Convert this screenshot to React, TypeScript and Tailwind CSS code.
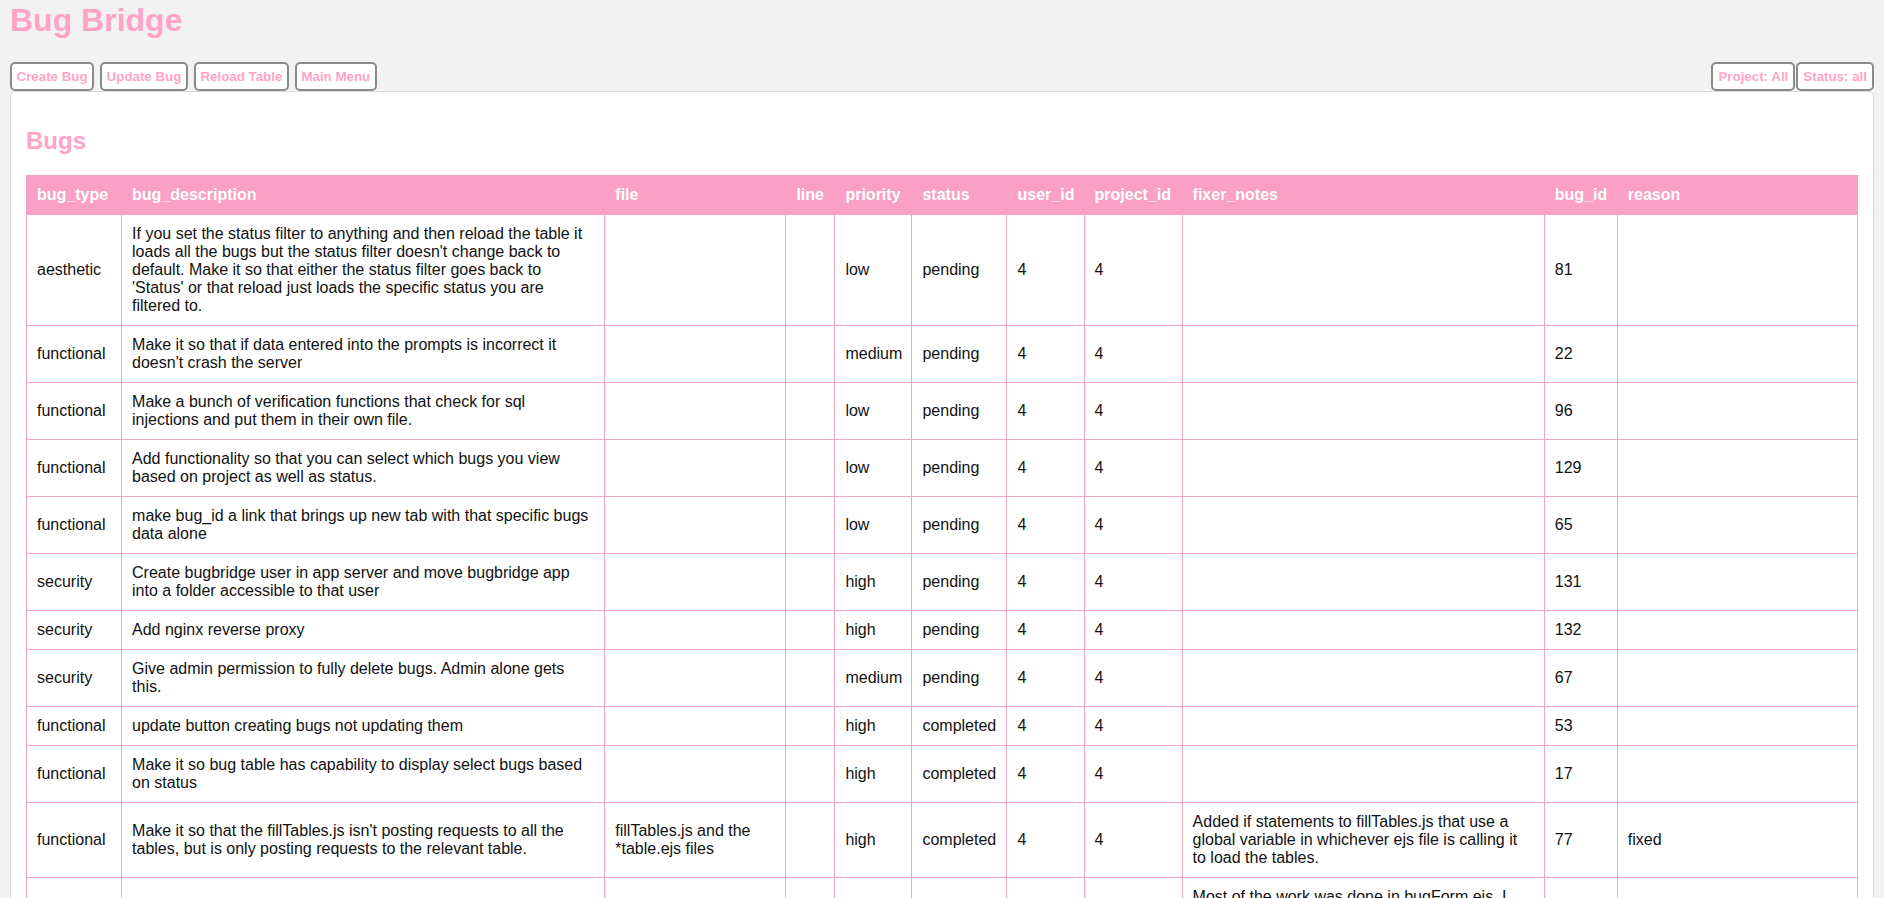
type Bug = {
  type: string;
  desc: string;
  file: string;
  line: string;
  priority: string;
  status: string;
  userId: number;
  projectId: number;
  notes: string;
  bugId: number;
  reason: string;
};

const bugs: Bug[] = [
  {
    type: "aesthetic",
    desc: "If you set the status filter to anything and then reload the table it loads all the bugs but the status filter doesn't change back to default. Make it so that either the status filter goes back to 'Status' or that reload just loads the specific status you are filtered to.",
    file: "",
    line: "",
    priority: "low",
    status: "pending",
    userId: 4,
    projectId: 4,
    notes: "",
    bugId: 81,
    reason: "",
  },
  {
    type: "functional",
    desc: "Make it so that if data entered into the prompts is incorrect it doesn't crash the server",
    file: "",
    line: "",
    priority: "medium",
    status: "pending",
    userId: 4,
    projectId: 4,
    notes: "",
    bugId: 22,
    reason: "",
  },
  {
    type: "functional",
    desc: "Make a bunch of verification functions that check for sql injections and put them in their own file.",
    file: "",
    line: "",
    priority: "low",
    status: "pending",
    userId: 4,
    projectId: 4,
    notes: "",
    bugId: 96,
    reason: "",
  },
  {
    type: "functional",
    desc: "Add functionality so that you can select which bugs you view based on project as well as status.",
    file: "",
    line: "",
    priority: "low",
    status: "pending",
    userId: 4,
    projectId: 4,
    notes: "",
    bugId: 129,
    reason: "",
  },
  {
    type: "functional",
    desc: "make bug_id a link that brings up new tab with that specific bugs data alone",
    file: "",
    line: "",
    priority: "low",
    status: "pending",
    userId: 4,
    projectId: 4,
    notes: "",
    bugId: 65,
    reason: "",
  },
  {
    type: "security",
    desc: "Create bugbridge user in app server and move bugbridge app into a folder accessible to that user",
    file: "",
    line: "",
    priority: "high",
    status: "pending",
    userId: 4,
    projectId: 4,
    notes: "",
    bugId: 131,
    reason: "",
  },
  {
    type: "security",
    desc: "Add nginx reverse proxy",
    file: "",
    line: "",
    priority: "high",
    status: "pending",
    userId: 4,
    projectId: 4,
    notes: "",
    bugId: 132,
    reason: "",
  },
  {
    type: "security",
    desc: "Give admin permission to fully delete bugs. Admin alone gets this.",
    file: "",
    line: "",
    priority: "medium",
    status: "pending",
    userId: 4,
    projectId: 4,
    notes: "",
    bugId: 67,
    reason: "",
  },
  {
    type: "functional",
    desc: "update button creating bugs not updating them",
    file: "",
    line: "",
    priority: "high",
    status: "completed",
    userId: 4,
    projectId: 4,
    notes: "",
    bugId: 53,
    reason: "",
  },
  {
    type: "functional",
    desc: "Make it so bug table has capability to display select bugs based on status",
    file: "",
    line: "",
    priority: "high",
    status: "completed",
    userId: 4,
    projectId: 4,
    notes: "",
    bugId: 17,
    reason: "",
  },
  {
    type: "functional",
    desc: "Make it so that the fillTables.js isn't posting requests to all the tables, but is only posting requests to the relevant table.",
    file: "fillTables.js and the *table.ejs files",
    line: "",
    priority: "high",
    status: "completed",
    userId: 4,
    projectId: 4,
    notes: "Added if statements to fillTables.js that use a global variable in whichever ejs file is calling it to load the tables.",
    bugId: 77,
    reason: "fixed",
  },
  {
    type: "functional",
    desc: "Make the update form fill in the current values of the bug when a bug_id is entered.",
    file: "bugForm.ejs",
    line: "",
    priority: "medium",
    status: "completed",
    userId: 4,
    projectId: 4,
    notes: "Most of the work was done in bugForm.ejs. I added a fetch request that grabs the bug by its bug_id and then fills each of the inputs with the values that came back. If the bug_id doesn't exist the form is cleared and an alert tells the user that no bug was found.",
    bugId: 58,
    reason: "fixed",
  },
];

const columns = [
  { name: "bug_type", w: "w-[95px]" },
  { name: "bug_description", w: "w-[483px]" },
  { name: "file", w: "w-[181px]" },
  { name: "line", w: "w-[49px]" },
  { name: "priority", w: "w-[77px]" },
  { name: "status", w: "w-[95px]" },
  { name: "user_id", w: "w-[77px]" },
  { name: "project_id", w: "w-[98px]" },
  { name: "fixer_notes", w: "w-[362px]" },
  { name: "bug_id", w: "w-[73px]" },
  { name: "reason", w: "w-[240px]" },
];

function TabButton({ label, wide }: { label: string; wide?: boolean }) {
  return (
    <button
      className={
        "bg-white border-2 border-[#8a8a8a] rounded-[5px] py-[5px] text-[13.33px] leading-[15px] font-bold text-[#ffa3c8] " +
        (wide ? "px-[5px]" : "px-[4.5px]")
      }
    >
      {label}
    </button>
  );
}

const td = "border border-[#f7a3c6] px-[10px] py-[10px] align-middle";

export default function App() {
  return (
    <div className="min-h-screen bg-[#f2f2f2] px-[10px] pt-[2px] font-['Liberation_Sans',Arial,sans-serif] text-[#111]">
      <h1 className="text-[32px] leading-[37px] font-bold text-[#ffa3c8] mb-[23px]">
        Bug Bridge
      </h1>

      {/* Tabs row */}
      <div className="flex items-end justify-between">
        <div className="flex gap-[6px]">
          <TabButton label="Create Bug" />
          <TabButton label="Update Bug" />
          <TabButton label="Reload Table" />
          <TabButton label="Main Menu" />
        </div>
        <div className="flex gap-[1px]">
          <TabButton label="Project: All" wide />
          <TabButton label="Status: all" wide />
        </div>
      </div>

      {/* Panel */}
      <div className="bg-white border border-[#dcdcdc] rounded-[5px] p-[15px]">
        <h2 className="text-[24px] leading-[28px] font-bold text-[#ffa3c8] mt-[20px] mb-[20px]">
          Bugs
        </h2>
        <table className="w-full table-fixed border-collapse text-[16px] leading-[18px]">
          <colgroup>
            {columns.map((c) => (
              <col key={c.name} className={c.w} />
            ))}
          </colgroup>
          <thead>
            <tr className="bg-[#f9a0c4] text-white">
              {columns.map((c) => (
                <th
                  key={c.name}
                  className="border border-[#f9a0c4] px-[10px] py-[10px] text-left font-bold"
                >
                  {c.name}
                </th>
              ))}
            </tr>
          </thead>
          <tbody>
            {bugs.map((b) => (
              <tr key={b.bugId}>
                <td className={td}>{b.type}</td>
                <td className={td}>{b.desc}</td>
                <td className={td}>{b.file}</td>
                <td className={td}>{b.line}</td>
                <td className={td}>{b.priority}</td>
                <td className={td}>{b.status}</td>
                <td className={td}>{b.userId}</td>
                <td className={td}>{b.projectId}</td>
                <td className={td}>{b.notes}</td>
                <td className={td}>{b.bugId}</td>
                <td className={td}>{b.reason}</td>
              </tr>
            ))}
          </tbody>
        </table>
      </div>
    </div>
  );
}
